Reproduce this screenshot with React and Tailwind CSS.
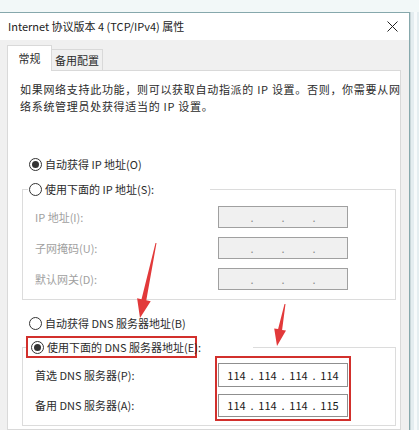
import React from 'react'

function Radio({ checked }) {
  return (
    <span className="flex h-[13px] w-[13px] shrink-0 items-center justify-center rounded-full border border-[#333] bg-white">
      {checked && <span className="h-[7px] w-[7px] rounded-full bg-[#333]" />}
    </span>
  )
}

// four octet cells with the separating dots between them
function IpField({ octets = ['', '', '', ''], disabled, className = '' }) {
  return (
    <div
      className={`flex w-[130px] items-center border pl-[2px] ${
        disabled ? 'border-[#a0a0a0] bg-[#f0f0f0]' : 'border-[#8f8f8f] bg-white text-[#1a1a1a]'
      } ${className}`}
    >
      {octets.map((o, i) => (
        <React.Fragment key={i}>
          {i > 0 && (
            <span className={`flex w-0 justify-center ${disabled ? 'text-[#8a8a8a]' : ''}`}>.</span>
          )}
          <span className="w-[31px] text-center">{o}</span>
        </React.Fragment>
      ))}
    </div>
  )
}

const ipRows = ['IP 地址(I):', '子网掩码(U):', '默认网关(D):']

export default function App() {
  return (
    <div className="relative h-[430px] w-[419px] overflow-hidden bg-[#f2f8f8] font-['Noto_Sans_CJK_SC',sans-serif] text-[11px] leading-[17px] text-[#2b2b2b]">
      <div className="flex h-full">
        {/* dialog window */}
        <div className="mt-[12px] flex w-[410px] flex-col border-t border-r border-[#86a8ac] bg-[#f0f0f0]">
          <div className="flex h-[27px] shrink-0 items-center justify-between bg-white pl-[8px] pr-[10px]">
            <span className="whitespace-nowrap text-[#222]">Internet 协议版本 4 (TCP/IPv4) 属性</span>
            <svg width="11" height="11" viewBox="0 0 11 11" className="mr-[1px]">
              <path d="M0.5 0.5 L10.5 10.5 M10.5 0.5 L0.5 10.5" stroke="#222" strokeWidth="1" />
            </svg>
          </div>

          {/* tabs */}
          <div className="flex h-[30px] shrink-0 items-end pl-[7px]">
            <div className="relative z-10 -mb-px flex h-[26px] w-[45px] items-center justify-center border border-b-0 border-[#d9d9d9] bg-white pb-[1px]">
              常规
            </div>
            <div className="flex h-[21px] w-[51px] items-center justify-center border-t border-r border-[#d9d9d9] bg-[#f0f0f0] pt-[1px]">
              备用配置
            </div>
          </div>

          {/* general tab page */}
          <div className="ml-[7px] mr-[8px] flex-1 border border-[#d9d9d9] bg-white pl-[12px] pt-[10px]">
            <p className="whitespace-nowrap tracking-[0.7px]">
              如果网络支持此功能，则可以获取自动指派的 IP 设置。否则，你需要从网
              <br />
              络系统管理员处获得适当的 IP 设置。
            </p>

            <label className="mt-[39px] ml-[9px] flex h-[20px] items-center gap-[3px]">
              <Radio checked />
              <span>自动获得 IP 地址(O)</span>
            </label>

            <fieldset className="mt-[5px] ml-[2px] w-[374px] min-w-0 border border-[#dcdcdc] pb-[9px]">
              <legend className="ml-[5px] flex h-[20px] w-[182px] items-center gap-[3px] pl-[1px]">
                <Radio />
                <span>使用下面的 IP 地址(S):</span>
              </legend>
              <div className="flex flex-col gap-[9px] pt-[7px] pl-[12px]">
                {ipRows.map((label) => (
                  <div key={label} className="flex h-[22px] items-center">
                    <span className="w-[183px] text-[#a0a0a0]">{label}</span>
                    <IpField disabled className="h-[22px]" />
                  </div>
                ))}
              </div>
            </fieldset>

            <label className="mt-[13px] ml-[9px] flex h-[20px] items-center gap-[3px]">
              <Radio />
              <span>自动获得 DNS 服务器地址(B)</span>
            </label>

            <fieldset className="mt-[3px] ml-[2px] w-[374px] min-w-0 border border-[#dcdcdc] pb-[4px]">
              <legend className="ml-[3px] flex">
                <span className="flex h-[22px] w-[171px] items-center gap-[3px] border-2 border-[#d2302c] pl-[3px]">
                  <Radio checked />
                  <span className="whitespace-nowrap">使用下面的 DNS 服务器地址(E):</span>
                </span>
                <span className="w-[56px]" />
              </legend>
              <div className="-mt-[2px] flex pl-[12px]">
                <div className="flex w-[180px] flex-col pt-[7px]">
                  <span className="flex h-[24px] items-center">首选 DNS 服务器(P):</span>
                  <span className="mt-[7px] flex h-[23px] items-center">备用 DNS 服务器(A):</span>
                </div>
                <div className="flex flex-col border-2 border-[#d2302c] px-[1px] pt-[5px] pb-[2px]">
                  <IpField octets={['114', '114', '114', '114']} className="h-[24px]" />
                  <IpField octets={['114', '114', '114', '115']} className="mt-[7px] h-[23px]" />
                </div>
              </div>
            </fieldset>
          </div>
        </div>

        {/* edge of the window behind */}
        <div className="mt-[12px] flex flex-1 border-l border-[#c9d6d9] bg-[#e4edf0]">
          <div className="ml-[3px] w-[3px] bg-[#f7fafb]" />
        </div>
      </div>

      {/* annotation arrows */}
      <svg className="pointer-events-none absolute inset-0" width="419" height="430" viewBox="0 0 419 430">
        <polygon
          points="155.5,242.9 156.5,243.1 146.3,300.2 150.7,301.2 140,318 137.1,298.2 141.5,299.2"
          fill="#e2393a"
        />
        <polygon
          points="284.5,303.9 285.5,304.1 282.1,329.9 286,330.6 277,346 274.2,328.4 278.1,329.1"
          fill="#e2393a"
        />
      </svg>
    </div>
  )
}
